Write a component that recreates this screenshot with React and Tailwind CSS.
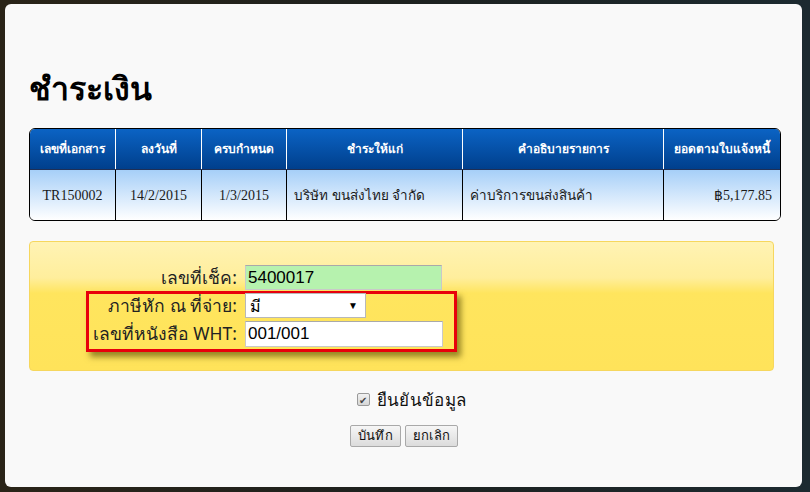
import React from "react";

const cols = [
  { w: "w-[86px]", h: "เลขที่เอกสาร" },
  { w: "w-[86px]", h: "ลงวันที่" },
  { w: "w-[85px]", h: "ครบกำหนด" },
  { w: "w-[176px]", h: "ชำระให้แก่" },
  { w: "w-[201px]", h: "คำอธิบายรายการ" },
  { w: "flex-1", h: "ยอดตามใบแจ้งหนี้" },
];

export default function App() {
  return (
    <div className="w-[810px] h-[492px] overflow-hidden bg-[linear-gradient(90deg,#2a2418_0%,#1d211f_50%,#1c2a30_100%)] pt-[4px] pl-[5px] font-['Noto_Sans',sans-serif]">
      <div className="w-[797px] h-[483px] rounded-[6px] bg-[#f9f9f9] pl-[24px] pr-[21px] pt-[64px]">
        <h1 className="text-[32px] leading-[40px] font-bold text-black font-['Noto_Sans',sans-serif]">ชำระเงิน</h1>

        <div className="mt-[20px] w-[752px] border border-black rounded-[6px] overflow-hidden">
          <div className="flex h-[41px] bg-[linear-gradient(#0b63c4,#003f8c)] border-b border-[#1f2f55]">
            {cols.map((c, i) => (
              <div
                key={i}
                className={`${c.w} flex items-center justify-center text-white font-bold text-[12px] ${i < 5 ? "border-r border-white" : ""}`}
              >
                {c.h}
              </div>
            ))}
          </div>
          <div className="flex h-[50px] bg-[linear-gradient(#a6cff8,#ffffff)] text-[14px] text-[#1a1a1a]">
            <div className="w-[86px] flex items-center justify-center border-r border-black font-['Liberation_Serif',serif]">TR150002</div>
            <div className="w-[86px] flex items-center justify-center border-r border-black font-['Liberation_Serif',serif]">14/2/2015</div>
            <div className="w-[85px] flex items-center justify-center border-r border-black font-['Liberation_Serif',serif]">1/3/2015</div>
            <div className="w-[176px] flex items-center pl-[7px] border-r border-black text-[13.5px]">บริษัท ขนส่งไทย จำกัด</div>
            <div className="w-[201px] flex items-center pl-[7px] border-r border-black text-[13.5px]">ค่าบริการขนส่งสินค้า</div>
            <div className="flex-1 flex items-center justify-end pr-[8px] font-['Liberation_Serif',serif]">฿5,177.85</div>
          </div>
        </div>

        <div className="mt-[20px] w-[745px] h-[130px] rounded-[4px] border border-[#f6d75e] bg-[linear-gradient(#fff3b4_0%,#ffee9c_28%,#ffe55e_40%,#ffe35a_100%)] pt-[23px] relative">
          <div className="absolute left-[56px] top-[49px] w-[371px] h-[61px] border-[3px] border-[#e8000b] shadow-[4px_5px_6px_rgba(80,70,0,0.6)]" />
          <div className="flex flex-col gap-[3px] relative">
            <div className="flex items-center h-[25px]">
              <div className="w-[207px] text-right text-[17.5px] text-[#222]">เลขที่เช็ค:</div>
              <div className="ml-[8px] w-[197px] h-[25px] bg-[#b6f2ae] border border-[#c9c9c9] border-t-[#a9a9a9] flex items-center px-[2px] text-[17px] font-['Liberation_Sans',sans-serif] text-black">5400017</div>
            </div>
            <div className="flex items-center h-[25px]">
              <div className="w-[207px] text-right text-[17.5px] text-[#222]">ภาษีหัก ณ ที่จ่าย:</div>
              <div className="ml-[8px] w-[121px] h-[25px] bg-white border border-[#b8b8b8] flex items-center justify-between pl-[4px] pr-[7px] text-[16px] text-black">
                <span>มี</span>
                <span className="text-[10px]">▼</span>
              </div>
            </div>
            <div className="flex items-center h-[25px]">
              <div className="w-[207px] text-right text-[17.5px] text-[#222]">เลขที่หนังสือ WHT:</div>
              <div className="ml-[8px] w-[198px] h-[26px] bg-white border border-[#c9c9c9] border-t-[#a9a9a9] flex items-center px-[2px] text-[17px] font-['Liberation_Sans',sans-serif] text-black">001/001</div>
            </div>
          </div>
        </div>

        <div className="mt-[16px] flex items-center justify-center gap-[7px] pl-[13px]">
          <span className="w-[13px] h-[13px] rounded-[2px] border border-[#9a9a9a] bg-[linear-gradient(#f2f2f2,#d6d6d6)] flex items-center justify-center text-[10px] leading-none text-[#444]">✔</span>
          <span className="text-[17px] tracking-[0.3px] text-[#111]">ยืนยันข้อมูล</span>
        </div>

        <div className="mt-[12px] flex justify-center gap-[4px] pr-[2px]">
          <button className="h-[22px] px-[7px] rounded-[2px] border border-[#a9a9a9] bg-[linear-gradient(#f6f6f6,#dcdcdc)] text-[13px] tracking-[0.3px] text-[#111] leading-none">บันทึก</button>
          <button className="h-[22px] px-[7px] rounded-[2px] border border-[#a9a9a9] bg-[linear-gradient(#f6f6f6,#dcdcdc)] text-[13px] tracking-[0.3px] text-[#111] leading-none">ยกเลิก</button>
        </div>
      </div>
    </div>
  );
}
